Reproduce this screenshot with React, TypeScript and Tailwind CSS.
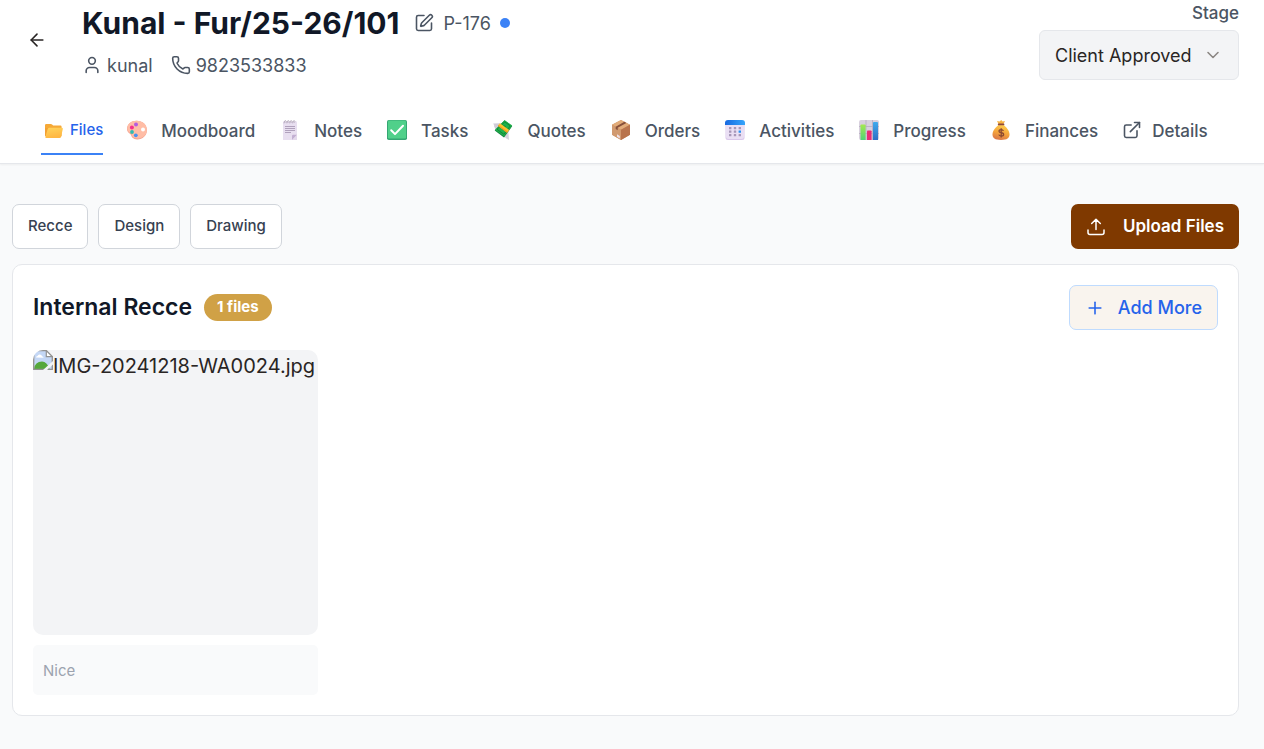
import type { ReactNode } from 'react';
import { ArrowLeft, ChevronDown, ExternalLink, Phone, Plus, SquarePen, User } from 'lucide-react';

function FolderIcon() {
  return (
    <svg viewBox="0 0 20 20" className="h-5 w-5" aria-hidden="true">
      <defs>
        <linearGradient id="folder-front" x1="0" y1="0" x2="0.3" y2="1">
          <stop offset="0" stopColor="#ffd45c" />
          <stop offset="1" stopColor="#ffb743" />
        </linearGradient>
      </defs>
      <path d="M1 4.200q0-1.200 1.200-1.200h4.600q.8 0 1.300.6l1 1h7.300q1.200 0 1.200 1.200v9.400H2.200Q1 15.200 1 14z" fill="#f6a937" />
      <path d="M1 7h16v8H1z" fill="#f2a033" />
      <path d="M5.500 6.800h12.400q1.100 0 .9 1.100l-1.700 7.800q-.3 1.300-1.500 1.300H2.400q-1.300 0-1.100-1.100l2.400-7.800q.4-1.300 1.800-1.300z" fill="url(#folder-front)" />
    </svg>
  );
}

function PaletteIcon() {
  return (
    <svg viewBox="0 0 20 20" className="h-5 w-5" aria-hidden="true">
      <path d="M9.500.8C4.300.8 0 4.300 0 8.900c0 3.200 2.500 4.300 3.700 5.500.9.900.6 2 1.600 3.200 1.200 1.400 3 1.800 4.900 1.800 5.400 0 9.700-3.900 9.700-9.200C19.900 4.500 15.500.8 9.500.8z" fill="#f3a08c" />
      <path d="M9.500.8C4.300.8.300 4 .300 8.400c0 3.200 2.500 4 3.700 5.200.9.900.6 2 1.600 3.200 1.100 1.300 2.800 1.700 4.700 1.700 5.200 0 9.500-3.500 9.500-8.600C19.800 4.500 15.500.8 9.500.8z" fill="#ffbda6" />
      <circle cx="16" cy="9.500" r="2" fill="#fff" />
      <circle cx="9" cy="4.600" r="2" fill="#b35be0" />
      <circle cx="4.900" cy="7.600" r="2" fill="#f4318c" />
      <circle cx="5" cy="12" r="1.900" fill="#2fbcb2" />
      <circle cx="8.800" cy="15.300" r="1.900" fill="#4a91f2" />
    </svg>
  );
}

function NotepadIcon() {
  return (
    <svg viewBox="0 0 20 20" className="h-5 w-5" aria-hidden="true">
      <path d="M3 1.500h14v13.200L12.200 20H3z" fill="#e8dff0" />
      <path d="M17 14.700V20h-4.800z" fill="#e4d9ec" />
      <path d="M12 20v-4q0-1.300 1.300-1.300H17z" fill="#c3b0d2" />
      <path d="M4 3.300q.3-3 1.600-2.700 1 .3.300 2M6.900 3.300q.3-3 1.600-2.700 1 .3.300 2M9.800 3.300q.3-3 1.600-2.700 1 .3.300 2M12.700 3.300q.3-3 1.600-2.700 1 .3.300 2" fill="none" stroke="#a79aaf" strokeWidth=".8" />
      <path d="M5 6.500h10M5 8.500h10M5 10.500h10M5 12.500h6" stroke="#a99ab5" strokeWidth=".9" />
    </svg>
  );
}

function CheckIcon() {
  return (
    <svg viewBox="0 0 20 20" className="h-5 w-5" aria-hidden="true">
      <rect width="20" height="20" rx="1.800" fill="#35a673" />
      <rect x="1" y=".6" width="18" height="18" rx="1.300" fill="#50d08a" />
      <path d="M4.200 10.200l3.800 3.900 8-8.300" fill="none" stroke="#fff" strokeWidth="2" strokeLinecap="round" strokeLinejoin="round" />
    </svg>
  );
}

function MoneyWingsIcon() {
  return (
    <svg viewBox="0 0 20 20" className="h-5 w-5" aria-hidden="true">
      <path d="M.2 3.500l7.500-.2 1.500 3-6 4.700q-.3-1.700-1.200-2.400.2-1-.8-1.700.3-1.500-1-3.400z" fill="#cfcbd7" />
      <path d="M10 15l5.200-4.500.8 9.300q-1.300-.1-1.700-1-1 .2-1.600-1-1.500-.2-1.700-1.500z" fill="#d5d2dc" />
      <path d="M11.500.2l7.700 6-8.200 11.400-9.300-7z" fill="#12833d" />
      <path d="M11.700.2l7.500 5.300-8.200 10.800-9-6.500z" fill="#20b24c" />
      <path d="M11.800 1.900l5.500 4-6.400 8.400-6.900-5z" fill="none" stroke="#0c7c33" strokeWidth=".8" />
      <ellipse cx="11" cy="7.700" rx="2.100" ry="2.500" fill="#108a3a" />
      <path d="M4.900 5.800l2-2.500 9.300 6.700-2.200 2.700z" fill="#ffc12c" />
      <path d="M4.900 5.800l.6-.8 9.300 6.700-.8 1z" fill="#f19b25" />
    </svg>
  );
}

function PackageIcon() {
  return (
    <svg viewBox="0 0 20 20" className="h-5 w-5" aria-hidden="true">
      <path d="M10 0l9 4.800v10L10 20l-9-5.200v-10z" fill="#c88a5c" />
      <path d="M10 0l9 4.800-9 5-9-5z" fill="#e2ac79" />
      <path d="M1 4.800l9 5V20l-9-5.200z" fill="#d19a70" />
      <path d="M10 9.800l9-5v10L10 20z" fill="#b9744c" />
      <path d="M4.700 6.700l8.700-4.900 2 1.100-8.700 4.900v2.400l-2-1.100z" fill="#875039" />
      <path d="M6 14.300l2.800 1.600v2.500L6 16.800z" fill="#eee1e8" />
    </svg>
  );
}

function CalendarIcon() {
  const rows = [8, 11.500, 15];
  const columns = [5, 9.800, 14.600];
  return (
    <svg viewBox="0 0 20 20" className="h-5 w-5" aria-hidden="true">
      <defs>
        <linearGradient id="calendar-top">
          <stop offset="0" stopColor="#1769e0" />
          <stop offset="1" stopColor="#36a5fb" />
        </linearGradient>
      </defs>
      <rect x=".5" y="1" width="19" height="19" rx="2.500" fill="#d9c7ea" />
      <rect x="1" y="1" width="18" height="18" rx="2.500" fill="#eadff4" />
      <path d="M0 5V3q0-3 3-3h14q3 0 3 3v2z" fill="url(#calendar-top)" />
      {rows.map((y) =>
        columns.map((x) => (
          <rect key={`${x}-${y}`} x={x - 1} y={y - 1} width="2.400" height="2.200" rx=".3" fill={x === 14.600 && y === 11.500 ? '#2793f5' : '#a797b8'} />
        )),
      )}
    </svg>
  );
}

function BarChartIcon() {
  return (
    <svg viewBox="0 0 20 20" className="h-5 w-5" aria-hidden="true">
      <defs>
        <linearGradient id="bar-green" x1="0" y1="0" x2="0" y2="1">
          <stop offset="0" stopColor="#a5e84f" />
          <stop offset="1" stopColor="#4fd477" />
        </linearGradient>
        <linearGradient id="bar-blue" x1="0" y1="0" x2="0" y2="1">
          <stop offset="0" stopColor="#3fa9ec" />
          <stop offset="1" stopColor="#2f6fc4" />
        </linearGradient>
      </defs>
      <rect width="20" height="20" rx="2" fill="#d8d0de" />
      <path d="M0 6.500h20M0 13.500h20M7 0v20M13.500 0v20" stroke="#b5abc0" strokeWidth=".8" />
      <path d="M1.500 20V5.300q0-.9.900-.9h3.300q.9 0 .9.900V20z" fill="url(#bar-green)" />
      <path d="M8 20v-8.700q0-.9.900-.9h2.800q.9 0 .9.900V20z" fill="#ea2e75" />
      <path d="M14 20V3q0-.9.900-.9h3.200q.9 0 .9.900v17z" fill="url(#bar-blue)" />
    </svg>
  );
}

function MoneyBagIcon() {
  return (
    <svg viewBox="0 0 20 20" className="h-5 w-5" aria-hidden="true">
      <defs>
        <linearGradient id="bag-body" x1="0.700" y1="0" x2="0.400" y2="1">
          <stop offset="0" stopColor="#ffcf4d" />
          <stop offset="0.550" stopColor="#f4a33c" />
          <stop offset="1" stopColor="#d97748" />
        </linearGradient>
      </defs>
      <path d="M6 .9l2.500.5L10.200 0l1.400 1.400L14 .9 12.500 4h-5z" fill="#f7b442" />
      <path d="M7.700 5h4.800c2.600 1.800 6 5.400 6 9.600 0 3.600-2.400 5.400-8.500 5.400s-8.500-1.800-8.500-5.400C1.500 10.400 5 6.800 7.700 5z" fill="url(#bag-body)" />
      <rect x="6.800" y="3.500" width="6.600" height="1.800" rx=".9" fill="#8f493c" />
      <path d="M12.400 10.900q-.5-1.200-2.300-1.200-2.100 0-2.100 1.500 0 1.200 2.200 1.500 2.400.3 2.400 1.700 0 1.600-2.300 1.600-2 0-2.500-1.400M10.200 8.200v9.200" fill="none" stroke="#8a4932" strokeWidth="1.300" />
    </svg>
  );
}

function UploadIcon() {
  return (
    <svg viewBox="0 0 20 20" className="h-5 w-5" fill="none" stroke="currentColor" strokeWidth="1.500" strokeLinecap="round" strokeLinejoin="round" aria-hidden="true">
      <path d="M10 12.500V2.500M5.700 6.500L10 2.200l4.300 4.300M2 13v2.500q0 2 2 2h12q2 0 2-2V13" />
    </svg>
  );
}

function MissingImageIcon() {
  return (
    <svg viewBox="0 0 20 20" className="h-5 w-5 shrink-0" aria-hidden="true">
      <path d="M1 1h12l6 6v12H1z" fill="#c4d7f5" />
      <path d="M3 7.500q0-1.500 1.500-1.500.6-1.700 2.300-1.500Q8.700 4.500 9 6.300q1.600.1 1.600 1.500z" fill="#fff" />
      <path d="M1 19q1-7.500 8-7.500 5 0 7.500 7.500z" fill="#55a83c" />
      <path d="M.7 19.400V.7h12.600l6 6v12.700z" fill="none" stroke="#929292" strokeWidth="1.300" />
      <path d="M13.300.7v6h6z" fill="#fff" stroke="#929292" strokeWidth="1.200" />
      <path d="M20 11L10 20h4l6-5.500z" fill="#f3f4f6" />
    </svg>
  );
}

const tabs: { label: string; icon: ReactNode }[] = [
  { label: 'Moodboard', icon: <PaletteIcon /> },
  { label: 'Notes', icon: <NotepadIcon /> },
  { label: 'Tasks', icon: <CheckIcon /> },
  { label: 'Quotes', icon: <MoneyWingsIcon /> },
  { label: 'Orders', icon: <PackageIcon /> },
  { label: 'Activities', icon: <CalendarIcon /> },
  { label: 'Progress', icon: <BarChartIcon /> },
  { label: 'Finances', icon: <MoneyBagIcon /> },
];

const categories = ['Recce', 'Design', 'Drawing'];

export default function App() {
  return (
    <div className="min-h-screen bg-[#f9fafb] font-['Inter',sans-serif] text-[#111827]">
      <header className="border-b border-[#e5e7eb] bg-white pb-2 shadow-xs">
        <div className="flex items-start pr-[25px] pl-[27px]">
          <button type="button" aria-label="Back" className="mt-[30px] flex h-5 w-5 items-center justify-center text-[#292524]">
            <ArrowLeft size={20} strokeWidth={1.900} />
          </button>
          <div className="ml-[35px] flex-1 pt-1">
            <div className="flex h-[38px] items-center">
              <h1 className="text-[30px] leading-[38px] font-bold">Kunal - Fur/25-26/101</h1>
              <button type="button" aria-label="Edit project" className="ml-[14px] text-[#4b5563]">
                <SquarePen size={20} strokeWidth={1.900} />
              </button>
              <span className="ml-[10px] text-[18px] text-[#4b5563]">P-176</span>
              <span className="ml-[9px] h-[10px] w-[10px] rounded-full bg-[#3b82f6]" />
            </div>
            <div className="mt-[11px] flex h-6 items-center text-[18px] text-[#4b5563]">
              <User size={20} strokeWidth={1.900} />
              <span className="ml-[5px]">kunal</span>
              <Phone size={20} strokeWidth={1.900} className="ml-[18px]" />
              <span className="ml-[5px]">9823533833</span>
            </div>
          </div>
          <div className="flex w-[200px] flex-col gap-1">
            <label htmlFor="stage" className="text-right text-[17px] leading-[26px] font-medium text-[#4b5563]">Stage</label>
            <div className="relative">
              <select id="stage" className="h-[50px] w-full appearance-none rounded-md border border-[#e5e7eb] bg-[#f3f4f6] pr-10 pl-[15px] text-[18px] text-[#292524]">
                <option>Client Approved</option>
              </select>
              <ChevronDown size={20} strokeWidth={1.900} className="pointer-events-none absolute top-[15px] right-4 text-[#8b8783]" />
            </div>
          </div>
        </div>
        <nav className="mt-[25px] flex h-[50px] items-center pl-[41px] whitespace-nowrap">
          <a href="#files" className="flex h-full items-center gap-[6px] border-b-2 border-[#3b82f6] pt-[3px] pl-[3px] text-[15px] font-medium text-[#2563eb]">
            <FolderIcon />
            Files
          </a>
          <div className="ml-6 flex items-center gap-[25px] pt-[2px]">
            {tabs.map((tab) => (
              <a key={tab.label} href={`#${tab.label.toLowerCase()}`} className="flex items-start gap-[14px] text-[17px] leading-[22px] font-medium text-[#4b5563]">
                {tab.icon}
                {tab.label}
              </a>
            ))}
          </div>
          <a href="#details" className="ml-6 flex items-start gap-[10px] pt-[2px] text-[17px] leading-[22px] font-medium text-[#4b5563]">
            <ExternalLink size={20} strokeWidth={1.900} />
            Details
          </a>
        </nav>
      </header>

      <main className="pt-10 pr-[25px] pb-8 pl-3">
        <div className="flex items-center gap-[10px]">
          {categories.map((category) => (
            <button key={category} type="button" className="h-[45px] rounded-[7px] border border-[#d1d5db] bg-white px-[15px] text-[15px] font-medium text-[#374151]">
              {category}
            </button>
          ))}
          <button type="button" className="ml-auto flex h-[45px] items-center gap-[17px] rounded-[7px] bg-[#7f3900] px-[15px] text-[17px] font-semibold text-white">
            <UploadIcon />
            Upload Files
          </button>
        </div>

        <section className="mt-[15px] rounded-[10px] border border-[#e5e7eb] bg-white p-5">
          <div className="flex items-center">
            <h2 className="text-[23px] font-semibold">Internal Recce</h2>
            <span className="ml-3 flex h-[27px] items-center rounded-full bg-[#d0a146] px-[13px] text-[15px] font-bold text-white">1 files</span>
            <button type="button" className="ml-auto flex h-[45px] items-center gap-[13px] rounded-[7px] border border-[#bfdbfe] bg-[#f9f4ee] px-[15px] text-[18px] font-medium text-[#2563eb]">
              <Plus size={20} strokeWidth={1.900} />
              Add More
            </button>
          </div>
          <div className="mt-5 w-[285px]">
            <a href="#file" className="flex aspect-square items-start overflow-hidden rounded-[10px] bg-[#f3f4f6] text-[20px] text-[#292524]">
              <MissingImageIcon />
              <span className="leading-8">IMG-20241218-WA0024.jpg</span>
            </a>
            <input aria-label="Note" defaultValue="Nice" className="mt-[10px] block h-[50px] w-full rounded-[5px] bg-[#f9fafb] px-[10px] text-[15px] text-[#9ca3af]" />
          </div>
        </section>
      </main>
    </div>
  );
}
